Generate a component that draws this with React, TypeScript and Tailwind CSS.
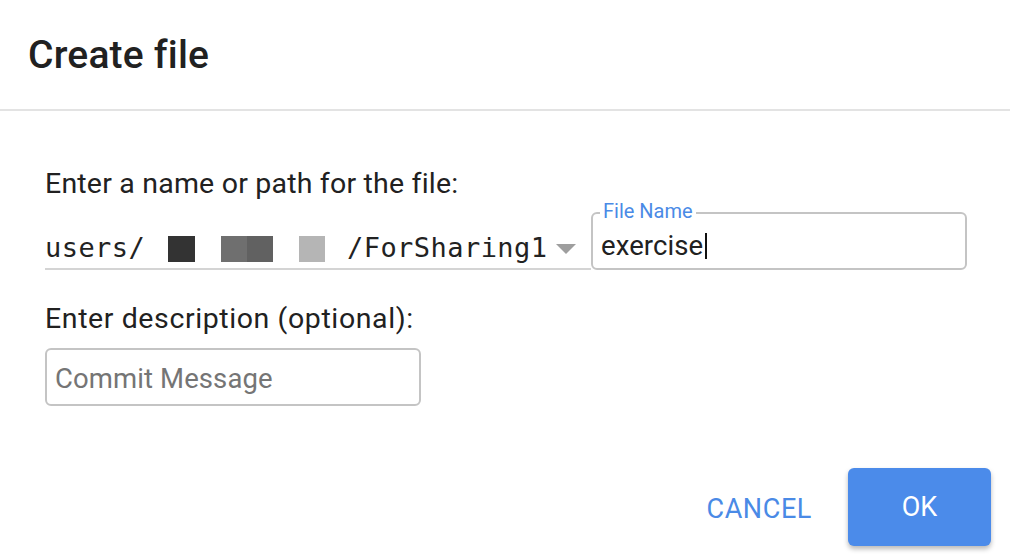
import React from "react";

export default function App() {
  return (
    <div className="w-[1010px] h-[560px] bg-white flex flex-col font-['Roboto',sans-serif] text-[#212121] overflow-hidden">
      <div className="h-[111px] shrink-0 border-b-2 border-[#e3e3e3] pl-[28px] flex items-center">
        <h1 className="text-[39px] leading-[40px] font-medium tracking-[0.2px]">Create file</h1>
      </div>
      <div className="flex flex-col pl-[45px] pt-[57px]">
        <div className="text-[28.5px] leading-[31px] tracking-[0.2px]">Enter a name or path for the file:</div>
        <div className="flex items-end mt-[13px]">
          <div className="w-[546px] h-[46px] border-b-2 border-[#d4d4d4] flex items-center font-['DejaVu_Sans_Mono',monospace] text-[27px] text-[#222] tracking-[0.45px] pt-[5px]">
            <span className="w-[123px] shrink-0">users/</span>
            <span className="w-[27px] h-[26px] bg-[#333333] shrink-0" />
            <span className="w-[26px] h-[26px] bg-[#6f6f6f] shrink-0 ml-[26px]" />
            <span className="w-[26px] h-[26px] bg-[#616161] shrink-0" />
            <span className="w-[26px] h-[26px] bg-[#b5b5b5] shrink-0 ml-[26px]" />
            <span className="ml-[22px] shrink-0">/ForSharing1</span>
            <svg width="20" height="10" viewBox="0 0 20 10" className="ml-auto mr-[15px] shrink-0">
              <polygon points="0,0 20,0 10,10" fill="#9e9e9e" />
            </svg>
          </div>
          <div className="relative w-[376px] h-[58px] border-2 border-[#c4c4c4] rounded-[6px] px-[8px] pt-[17px]">
            <span className="absolute left-[7px] top-[-14px] bg-white px-[3px] text-[20px] leading-[22px] text-[#4a8ae6]">File Name</span>
            <div className="flex items-center text-[27.5px] leading-[30px] tracking-[0.1px]">
              <span>exercise</span>
              <span className="inline-block w-[2px] h-[26px] bg-[#111] ml-[2px]" />
            </div>
          </div>
        </div>
        <div className="text-[28.5px] leading-[31px] tracking-[0.6px] mt-[33px]">Enter description (optional):</div>
        <div className="mt-[14px] w-[376px] h-[58px] border-2 border-[#c4c4c4] rounded-[6px] flex items-center px-[8px] pt-[3px]">
          <span className="text-[27.5px] leading-[30px] text-[#757575] tracking-[0.1px]">Commit Message</span>
        </div>
      </div>
      <div className="flex justify-end items-center mt-[62px] pr-[19px]">
        <button className="text-[27px] leading-[30px] text-[#4a8ae6] tracking-[0.6px] px-[8px] mr-[28px] pt-[3px]">CANCEL</button>
        <button className="w-[143px] h-[78px] rounded-[6px] bg-[#4b8bea] text-white text-[27px] shadow-[0_3px_5px_rgba(0,0,0,0.28)]">OK</button>
      </div>
    </div>
  );
}
